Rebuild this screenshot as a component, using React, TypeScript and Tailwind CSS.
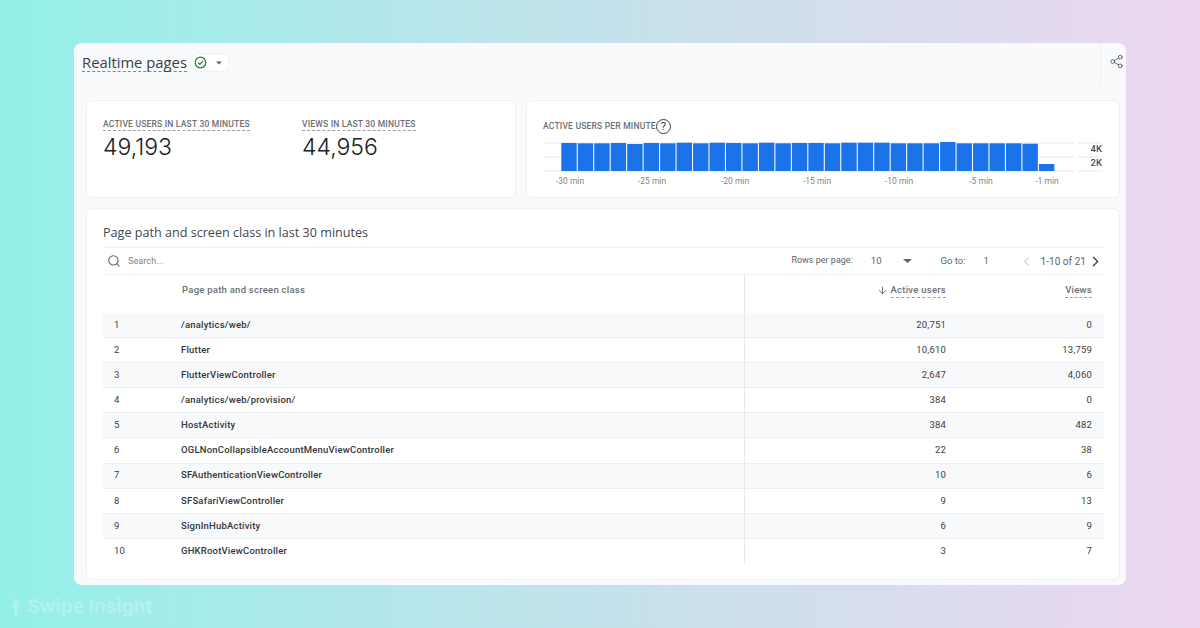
import { ChevronLeft, ChevronRight, Search, ArrowDown, Share2 } from "lucide-react";

const rows = [
  ["/analytics/web/", "20,751", "0"],
  ["Flutter", "10,610", "13,759"],
  ["FlutterViewController", "2,647", "4,060"],
  ["/analytics/web/provision/", "384", "0"],
  ["HostActivity", "384", "482"],
  ["OGLNonCollapsibleAccountMenuViewController", "22", "38"],
  ["SFAuthenticationViewController", "10", "6"],
  ["SFSafariViewController", "9", "13"],
  ["SignInHubActivity", "6", "9"],
  ["GHKRootViewController", "3", "7"],
];

// bar tops, read off the reference
const bars = [
  143, 143.3, 143.3, 143, 144, 143, 143.3, 142.7, 143.3, 142.7, 143, 143.3, 142.7, 143.3, 143, 143, 143.3, 142.7, 142.7,
  142.7, 143.3, 143.3, 143.3, 142, 143.3, 143.3, 143.3, 143.3, 143.7, 164,
];

const ticks = [
  ["-30 min", 570],
  ["-25 min", 652],
  ["-20 min", 735],
  ["-15 min", 817],
  ["-10 min", 899],
  ["-5 min", 981],
  ["-1 min", 1047],
];

const Chart = () => (
  <svg width="592" height="60" viewBox="527 135 592 60" className="block">
    {[143, 157, 171].map((y) => (
      <g key={y} stroke="#e6e8ea" strokeWidth="1">
        <line x1="543" x2="1074" y1={y} y2={y} />
        <line x1="1078" x2="1102" y1={y} y2={y} />
      </g>
    ))}
    {bars.map((top, i) => (
      <rect key={i} x={561.3 + i * 16.47} y={top} width="15.4" height={171 - top} fill="#1a73e8" />
    ))}
    <text x="1102" y="152" textAnchor="end" fontSize="9.5" fontWeight="500" fill="#4a4e52">4K</text>
    <text x="1102" y="166" textAnchor="end" fontSize="9.5" fontWeight="500" fill="#4a4e52">2K</text>
    {ticks.map(([label, x]) => (
      <text key={label} x={x} y="183.5" textAnchor="middle" fontSize="8.5" fill="#80868b">{label}</text>
    ))}
  </svg>
);

const Metric = ({ label, value, className }: { label: string; value: string; className: string }) => (
  <div className={className}>
    <span className="block w-fit border-b border-dashed border-[#9aa0a6] text-[8.5px] leading-[11px] font-medium tracking-[0.2px] text-[#6b7075]">
      {label}
    </span>
    <p className="mt-[1px] font-['Inter',sans-serif] font-light text-[23px] leading-[30px] text-[#202124]">{value}</p>
  </div>
);

export default function App() {
  return (
    <div className="w-[1200px] h-[628px] overflow-hidden pt-[43px] pl-[74px] bg-gradient-to-r from-[#93f0e9] via-[#c3e2ec] to-[#ecd6f0] font-['Roboto',sans-serif]">
      <div className="w-[1052px] h-[542px] rounded-lg bg-[#f8fafc] pl-3 pr-[6px] flex flex-col">
        <div className="h-[57px] flex items-start shrink-0">
          <div className="flex items-center gap-[3px] -ml-1 mt-[10px]">
            <h1 className="font-['Open_Sans',sans-serif] text-[14.8px] leading-[18px] text-[#3c4043] border-b border-dashed border-[#80868b]">
              Realtime pages
            </h1>
            <div className="flex items-center gap-[9px] h-[19px] pl-[3px] pr-[7px] rounded-full bg-white border border-[#eef0f2]">
              <svg width="13" height="13" viewBox="0 0 13 13" fill="none" stroke="#188038" strokeWidth="1.2">
                <circle cx="6.5" cy="6.5" r="5.3" />
                <path d="M4 6.7l1.8 1.8 3.4-3.6" />
              </svg>
              <svg width="6" height="4" viewBox="0 0 6 4" fill="#5f6368">
                <path d="M0 .5h6L3 3.5z" />
              </svg>
            </div>
          </div>
          <div className="ml-auto -mr-[6px] w-[26px] h-[42px] pl-[8px] border-l border-[#eceef0] flex items-center">
            <Share2 size={15} strokeWidth={1.5} className="text-[#5f6368] relative -top-[3px]" />
          </div>
        </div>

        <div className="flex gap-[10px] h-[98px] shrink-0">
          <div className="w-[430px] shrink-0 bg-white rounded-md border border-[#eef0f2] flex pl-[16px] pt-[18px]">
            <Metric label="ACTIVE USERS IN LAST 30 MINUTES" value="49,193" className="w-[199px]" />
            <Metric label="VIEWS IN LAST 30 MINUTES" value="44,956" className="" />
          </div>
          <div className="w-[594px] shrink-0 bg-white rounded-md border border-[#eef0f2] flex flex-col">
            <div className="flex items-center pl-[16px] pt-[16px] h-[34px]">
              <span className="text-[8.5px] leading-[11px] font-medium tracking-[0.2px] text-[#6b7075]">
                ACTIVE USERS PER MINUTE
              </span>
              <span className="w-[15px] h-[15px] rounded-full border border-[#3c4043] text-[11px] leading-[13px] text-center text-[#3c4043]">
                ?
              </span>
            </div>
            <Chart />
          </div>
        </div>

        <div className="mt-[10px] h-[372px] bg-white rounded-md border border-[#eef0f2] pl-[16px] pr-[15px]">
          <h2 className="font-['Open_Sans',sans-serif] text-[12.6px] leading-[16px] text-[#44484c] pt-[16px] h-[38px]">
            Page path and screen class in last 30 minutes
          </h2>
          <div className="h-[28px] border-y border-[#eef0f2] flex items-center text-[9px] text-[#5f6368]">
            <Search size={14} strokeWidth={1.8} className="ml-[4px] text-[#5f6368]" />
            <span className="ml-[7px] text-[9.2px] text-[#80868b]">Search...</span>
            <span className="ml-auto">Rows per page:</span>
            <span className="ml-[18px] text-[9.5px]">10</span>
            <svg width="9" height="4" viewBox="0 0 9 4" fill="#5f6368" className="ml-[21px]">
              <path d="M0 0h9L4.5 4z" />
            </svg>
            <span className="ml-[29px] text-[9.5px]">Go to:</span>
            <span className="ml-[18px] w-[22px] text-[9.5px]">1</span>
            <ChevronLeft size={15} strokeWidth={1.2} className="ml-[14px] text-[#9aa0a6]" />
            <span className="ml-[6px] text-[10px] tracking-[0.05px]">1-10 of 21</span>
            <ChevronRight size={17} strokeWidth={1.8} className="ml-[1px] text-[#3c4043]" />
          </div>
          <div className="relative">
            {/* column divider runs through the whole table */}
            <div className="absolute left-[641px] top-0 h-[288px] w-px bg-[#e6e8ea]" />
            <div className="flex h-[38px] pt-[8px] text-[9.5px] leading-[14px] font-medium tracking-[0.25px] text-[#6b7075]">
              <div className="w-[642px] pl-[79px]">Page path and screen class</div>
              <div className="w-[201px] flex justify-end items-start gap-[3px]">
                <ArrowDown size={11} strokeWidth={1.6} className="text-[#3c4043] mt-[2px]" />
                <span className="border-b border-dashed border-[#9aa0a6]">Active users</span>
              </div>
              <div className="w-[146px] flex justify-end">
                <span className="h-fit border-b border-dashed border-[#9aa0a6]">Views</span>
              </div>
            </div>
            {rows.map(([name, users, views], i) => (
              <div
                key={name}
                className={`grid grid-cols-[78px_564px_201px_146px] h-[25.1px] items-center border-b text-[9.5px] tracking-[0.2px] text-[#3c4043] ${
                  i % 2 === 0 ? "bg-[#f8f9fa]" : "bg-white"
                } ${i === 9 ? "border-transparent" : "border-[#eceef0]"}`}
              >
                <span className="pl-[11px]">{i + 1}</span>
                <span className="font-medium text-[#33363a]">{name}</span>
                <span className="text-right">{users}</span>
                <span className="text-right">{views}</span>
              </div>
            ))}
          </div>
        </div>
      </div>
      <div className="-ml-[64px] mt-[10px] flex items-center gap-[6px] text-white/25 text-[19px] leading-[24px] font-bold font-['Inter',sans-serif]">
        <svg width="11" height="17" viewBox="0 0 11 17" fill="currentColor">
          <path d="M4 0h3l1 3-1 3 3 3-2 1-1 3 1 4H5l-1-4 1-3-3-2 2-4z" />
        </svg>
        <span>Swipe Insight</span>
      </div>
    </div>
  );
}
